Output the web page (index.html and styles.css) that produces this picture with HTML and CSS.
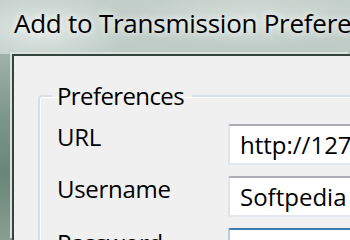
FILE: index.html
```html
<!DOCTYPE html>
<html>
<head>
<meta charset="utf-8">
<link rel="stylesheet" href="styles.css">
</head>
<body>
<div class="window">
  <div class="titlebar"><span class="title">Add to Transmission Preferences</span></div>
  <div class="frame">
    <div class="frame-left"></div>
    <div class="client">
      <fieldset class="group">
        <legend class="legend">Preferences</legend>
        <div class="form">
          <label class="label">URL</label>
          <div class="input">http://127.0.0.1:9091/</div>
          <label class="label">Username</label>
          <div class="input">Softpedia</div>
          <label class="label label-last">Password</label>
          <div class="input input-focus"></div>
        </div>
      </fieldset>
    </div>
  </div>
</div>
</body>
</html>
```
FILE: styles.css
```css
html, body {
  margin: 0;
  padding: 0;
  width: 350px;
  height: 240px;
  overflow: hidden;
}
body {
  font-family: "Open Sans", "Noto Sans", sans-serif;
  background: #a9bab2;
}
.window {
  width: 350px;
  height: 240px;
  display: flex;
  flex-direction: column;
  background:
    radial-gradient(ellipse 90px 40px at 40px 30px, rgba(235,242,240,0.7), rgba(235,242,240,0) 100%),
    radial-gradient(ellipse 120px 30px at 250px 20px, rgba(225,233,230,0.6), rgba(225,233,230,0) 100%),
    linear-gradient(180deg, #c3cfca 0%, #b9c7c1 40%, #a3b5ac 100%);
}
.titlebar {
  height: 54px;
  flex: none;
  padding-left: 14px;
  box-sizing: border-box;
  overflow: hidden;
  white-space: nowrap;
}
.title {
  display: block;
  font-size: 26px;
  letter-spacing: -0.25px;
  line-height: 26px;
  padding-top: 10px;
  color: #000;
  text-shadow: 0 0 6px rgba(255,255,255,0.9), 0 0 12px rgba(255,255,255,0.6);
}
.frame {
  flex: 1;
  display: flex;
  min-height: 0;
}
.frame-left {
  width: 12px;
  flex: none;
  background: linear-gradient(180deg, #a0b2a9 0%, #7b958a 35%, #6a8579 65%, #8a9f94 100%);
}
.client {
  flex: 1;
  background: #f0f0f0;
  border-top: 2px solid #34433c;
  border-left: 2px solid #34433c;
  box-shadow: -2px -2px 0 #d8e1dd;
  overflow: hidden;
}
.group {
  margin: 23px 0 0 24px;
  width: 500px;
  padding: 11px 0 0 17px;
  border: 2px solid #d5dfe5;
  border-radius: 4px;
  box-shadow: inset 1px 1px 0 #fff, 1px 1px 0 #fff;
}
.legend {
  padding: 0 8px 0 5px;
  margin-left: -5px;
  font-size: 24px;
  line-height: 34px;
  letter-spacing: -0.6px;
  color: #000;
}
.form {
  display: grid;
  grid-template-columns: 171px 300px;
  row-gap: 11px;
}
.label {
  font-size: 24px;
  line-height: 26px;
  letter-spacing: -0.3px;
  color: #000;
  align-self: start;
}
.label-last {
  padding-top: 2px;
}
.input {
  height: 41px;
  box-sizing: border-box;
  background: #fff;
  border: 2px solid #e2e3ea;
  border-top-color: #abadb3;
  border-bottom-color: #e3e9ef;
  border-radius: 2px;
  padding-left: 10px;
  font-size: 24px;
  line-height: 37px;
  white-space: nowrap;
  overflow: hidden;
  color: #000;
}
.input-focus {
  border-color: #b5cfe7;
  border-top-color: #3d7bad;
}
```
